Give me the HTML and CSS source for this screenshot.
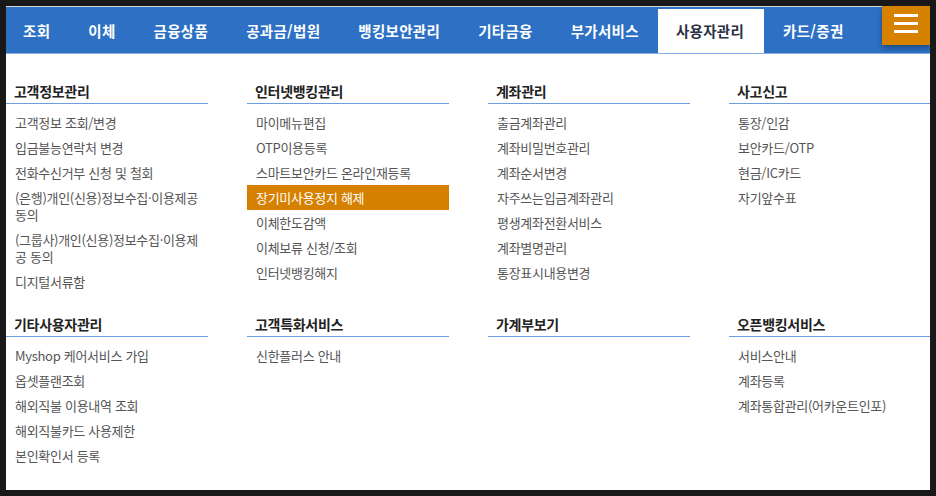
FILE: index.html
```html
<!DOCTYPE html>
<html lang="ko">
<head>
<meta charset="utf-8">
<title>사용자관리</title>
<link rel="stylesheet" href="styles.css">
</head>
<body>
<div class="frame">
  <nav class="gnb">
    <ul class="tabs">
      <li class="tab">조회</li>
      <li class="tab">이체</li>
      <li class="tab">금융상품</li>
      <li class="tab">공과금/법원</li>
      <li class="tab">뱅킹보안관리</li>
      <li class="tab">기타금융</li>
      <li class="tab">부가서비스</li>
      <li class="tab active">사용자관리</li>
      <li class="tab">카드/증권</li>
    </ul>
    <button class="menu-btn" aria-label="전체메뉴"><span></span><span></span><span></span></button>
  </nav>
  <div class="menu">
    <section class="group">
      <h3 class="group-title">고객정보관리</h3>
      <ul class="items">
        <li>고객정보 조회/변경</li>
        <li>입금불능연락처 변경</li>
        <li>전화수신거부 신청 및 철회</li>
        <li>(은행)개인(신용)정보수집·이용제공 동의</li>
        <li>(그룹사)개인(신용)정보수집·이용제공 동의</li>
        <li>디지털서류함</li>
      </ul>
    </section>
    <section class="group">
      <h3 class="group-title">인터넷뱅킹관리</h3>
      <ul class="items">
        <li>마이메뉴편집</li>
        <li>OTP이용등록</li>
        <li>스마트보안카드 온라인재등록</li>
        <li class="on">장기미사용정지 해제</li>
        <li>이체한도감액</li>
        <li>이체보류 신청/조회</li>
        <li>인터넷뱅킹해지</li>
      </ul>
    </section>
    <section class="group">
      <h3 class="group-title">계좌관리</h3>
      <ul class="items">
        <li>출금계좌관리</li>
        <li>계좌비밀번호관리</li>
        <li>계좌순서변경</li>
        <li>자주쓰는입금계좌관리</li>
        <li>평생계좌전환서비스</li>
        <li>계좌별명관리</li>
        <li>통장표시내용변경</li>
      </ul>
    </section>
    <section class="group">
      <h3 class="group-title">사고신고</h3>
      <ul class="items">
        <li>통장/인감</li>
        <li>보안카드/OTP</li>
        <li>현금/IC카드</li>
        <li>자기앞수표</li>
      </ul>
    </section>
    <section class="group">
      <h3 class="group-title">기타사용자관리</h3>
      <ul class="items">
        <li>Myshop 케어서비스 가입</li>
        <li>옵셋플랜조회</li>
        <li>해외직불 이용내역 조회</li>
        <li>해외직불카드 사용제한</li>
        <li>본인확인서 등록</li>
      </ul>
    </section>
    <section class="group">
      <h3 class="group-title">고객특화서비스</h3>
      <ul class="items">
        <li>신한플러스 안내</li>
      </ul>
    </section>
    <section class="group">
      <h3 class="group-title">가계부보기</h3>
      <ul class="items"></ul>
    </section>
    <section class="group">
      <h3 class="group-title">오픈뱅킹서비스</h3>
      <ul class="items">
        <li>서비스안내</li>
        <li>계좌등록</li>
        <li>계좌통합관리(어카운트인포)</li>
      </ul>
    </section>
  </div>
</div>
</body>
</html>
```
FILE: styles.css
```css
* { box-sizing: border-box; }
html, body { margin: 0; padding: 0; }
body {
  background: #181818;
  font-family: "Noto Sans CJK KR", "Noto Sans", sans-serif;
  width: 936px;
  height: 496px;
  overflow: hidden;
}
.frame {
  position: relative;
  margin: 6px 0 0 6px;
  width: 924px;
  height: 484px;
  background: #fff;
  overflow: hidden;
}
.gnb {
  height: 48px;
  background: #2e71c4;
  border-top: 1px solid #d8d8d8;
  border-bottom: 1px solid #86b0e6;
}
.tabs {
  list-style: none;
  margin: 0;
  padding: 0;
  display: flex;
  height: 100%;
}
.tab {
  display: flex;
  align-items: center;
  padding: 0 19px 0 19px;
  color: #fff;
  font-size: 14.5px;
  font-weight: 700;
  letter-spacing: 0.3px;
  height: 100%;
}
.tab:first-child { padding-left: 17px; }
.tab.active {
  background: #fff;
  color: #2b3245;
  margin-top: 2px;
  height: calc(100% - 2px);
  padding: 0 20px 2px 18px;
}
.menu-btn {
  position: absolute;
  top: 0;
  right: 0;
  width: 48px;
  height: 39px;
  border: 0;
  padding: 8px 0 0;
  background: #d78100;
  box-shadow: 0 3px 6px rgba(0,0,0,0.35);
  display: flex;
  flex-direction: column;
  align-items: center;
  gap: 5px;
}
.menu-btn span {
  display: block;
  width: 24px;
  height: 3px;
  background: #fff;
}
.menu {
  display: grid;
  grid-template-columns: repeat(4, 202px);
  column-gap: 39px;
  padding-top: 7px;
}
.group {
  padding-top: 20px;
}
.group-title {
  margin: 0;
  padding: 0 8px 2px;
  font-size: 14px;
  line-height: 20px;
  font-weight: 700;
  color: #222;
  letter-spacing: -0.3px;
  border-bottom: 1px solid #6d9fe0;
}
.items {
  list-style: none;
  margin: 6px 0 0;
  padding: 0;
}
.items li {
  padding: 4px 9px;
  font-size: 13px;
  line-height: 17px;
  color: #555;
  letter-spacing: -0.3px;
}
.items li.on {
  background: #d68000;
  color: #fff;
}
```
